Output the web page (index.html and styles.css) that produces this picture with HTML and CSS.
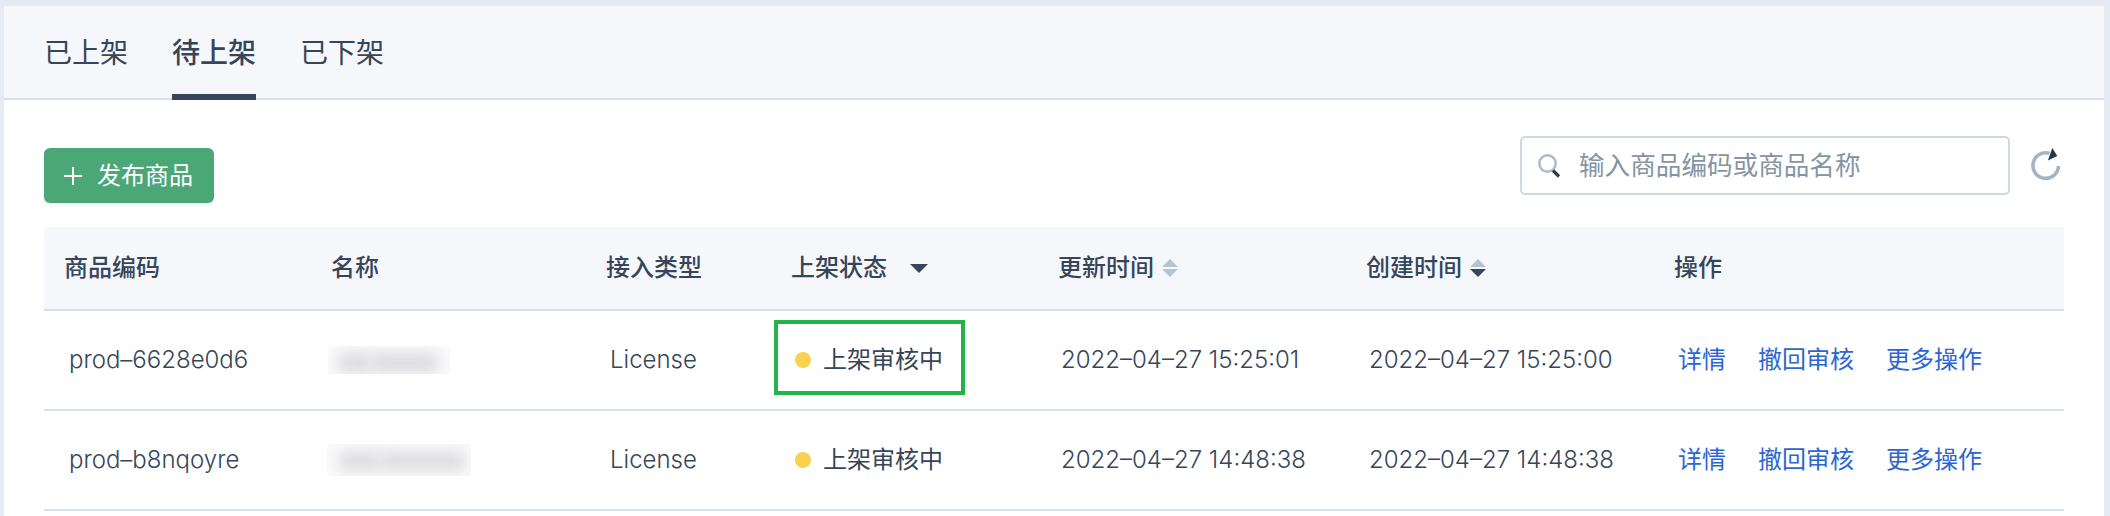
FILE: index.html
```html
<!DOCTYPE html>
<html lang="zh-CN">
<head>
<meta charset="utf-8">
<title>商品管理</title>
<link rel="stylesheet" href="styles.css">
</head>
<body>
<main class="panel">
  <nav class="tabs">
    <a class="tab">已上架</a>
    <a class="tab tab-active">待上架</a>
    <a class="tab">已下架</a>
  </nav>
  <div class="toolbar">
    <button class="publish">
      <svg class="plus" width="20" height="20" viewBox="0 0 20 20"><path d="M1 10h18M10 1v18" stroke="#fff" stroke-width="2" fill="none"/></svg>
      <span>发布商品</span>
    </button>
    <div class="tools">
      <div class="search">
        <svg width="24" height="26" viewBox="0 0 24 26" fill="none"><circle cx="10.5" cy="10.5" r="8.2" stroke="#a9bac8" stroke-width="2.4"/><path d="M16 17.5l6 6" stroke="#2b3b4d" stroke-width="3.2"/></svg>
        <span class="placeholder">输入商品编码或商品名称</span>
      </div>
      <svg class="refresh" width="32" height="36" viewBox="0 0 32 36" fill="none"><path d="M19.5 6.3A12.8 12.8 0 1 0 28.5 19" stroke="#a3b4c2" stroke-width="3.6"/><path d="M22.3 1l5 8-9.4 4.5z" fill="#24364a"/></svg>
    </div>
  </div>
  <section class="table">
    <div class="row head">
      <div>商品编码</div>
      <div>名称</div>
      <div>接入类型</div>
      <div>上架状态<svg class="caret" width="18" height="9" viewBox="0 0 18 9"><path d="M0 0h18l-9 9z" fill="#364559"/></svg></div>
      <div>更新时间<svg class="sort" width="16" height="18" viewBox="0 0 16 18"><path d="M8 0l8 8H0zM0 10h16l-8 8z" fill="#b6c2ce"/></svg></div>
      <div>创建时间<svg class="sort" width="16" height="18" viewBox="0 0 16 18"><path d="M8 0l8 8H0z" fill="#b6c2ce"/><path d="M0 10h16l-8 8z" fill="#364559"/></svg></div>
      <div>操作</div>
    </div>
    <div class="row">
      <div class="code">prod–6628e0d6</div>
      <div class="masked"><span class="mask mask-a"><i></i><i></i></span></div>
      <div class="type">License</div>
      <div><span class="status marked"><i class="dot"></i>上架审核中</span></div>
      <div class="time">2022–04–27 15:25:01</div>
      <div class="time">2022–04–27 15:25:00</div>
      <div class="actions"><a>详情</a><a>撤回审核</a><a>更多操作</a></div>
    </div>
    <div class="row">
      <div class="code">prod–b8nqoyre</div>
      <div class="masked"><span class="mask mask-b"><i></i><i></i></span></div>
      <div class="type">License</div>
      <div><span class="status"><i class="dot"></i>上架审核中</span></div>
      <div class="time">2022–04–27 14:48:38</div>
      <div class="time">2022–04–27 14:48:38</div>
      <div class="actions"><a>详情</a><a>撤回审核</a><a>更多操作</a></div>
    </div>
  </section>
</main>
</body>
</html>
```
FILE: styles.css
```css
*, *::after { box-sizing: border-box; }
body {
  margin: 0;
  height: 516px;
  overflow: hidden;
  padding: 6px 6px 0 4px;
  background: #e6ebf3;
  color: #364559;
  font: 400 24px/34px Inter, "Noto Sans CJK SC", sans-serif;
}
.panel { height: 510px; background: #fff; }
.tabs {
  display: flex;
  gap: 44px;
  height: 94px;
  padding: 0 40px;
  background: #f6f7fb;
  border-bottom: 2px solid #d8dfe8;
}
.tab { height: 94px; padding-top: 27px; font-size: 28px; line-height: 40px; }
.tab-active { font-weight: 500; border-bottom: 6px solid #364559; }
.toolbar {
  display: flex;
  justify-content: space-between;
  align-items: flex-start;
  height: 127px;
  padding: 36px 40px 0;
}
.publish {
  display: flex;
  align-items: center;
  gap: 14px;
  width: 170px;
  height: 55px;
  margin-top: 12px;
  padding: 1px 0 0 19px;
  border: 0;
  border-radius: 6px;
  background: #4ca777;
  color: #fff;
  font: inherit;
  box-shadow: 0 2px 4px rgba(0, 0, 0, .06);
}
.tools { display: flex; gap: 20px; }
.search {
  display: flex;
  align-items: center;
  gap: 18px;
  width: 490px;
  height: 59px;
  padding: 1px 0 0 15px;
  border: 2px solid #cdd9e5;
  border-radius: 5px;
}
.placeholder { color: #8494a4; font-size: 25.6px; white-space: nowrap; }
.refresh { margin: 11px 2px 0 0; }
.table { margin: 0 40px; }
.row {
  display: grid;
  grid-template-columns: 267px 275px 185px 267px 308px 308px 1fr;
  align-items: center;
  height: 100px;
  border-bottom: 2px solid #d8dfe8;
  white-space: nowrap;
}
.row > div { padding-left: 24px; }
.head { height: 84px; background: #f6f7fb; font-weight: 500; }
.head > div { display: flex; align-items: center; padding-left: 20px; }
.caret { margin-left: 23px; }
.sort { margin-left: 8px; }
.code, .time, .type { font-weight: 350; letter-spacing: 0; }
.row > .code { padding-left: 25px; }
.row > .time { padding-left: 23px; }
.status { display: inline-flex; position: relative; align-items: center; gap: 12px; }
.dot { width: 16px; height: 16px; border-radius: 50%; background: #f8d14f; }
.marked::after {
  content: "";
  position: absolute;
  left: -21px;
  top: -23px;
  width: 191px;
  height: 75px;
  border: 4px solid #25b14c;
}
.actions { display: flex; gap: 32px; color: #2d65d2; }
.row > .masked { padding-left: 16px; }
.mask { display: flex; gap: 0; overflow: hidden; background: #fafafb; }
.mask i { flex: 2; background: #dcdce0; filter: blur(7px); }
.mask i:first-child { flex: 1; }
.mask-a { width: 122px; height: 28px; margin-left: 1px; padding: 7px 12px 1px 10px; }
.mask-b { width: 144px; height: 32px; padding: 8px 6px 6px 12px; }
```
